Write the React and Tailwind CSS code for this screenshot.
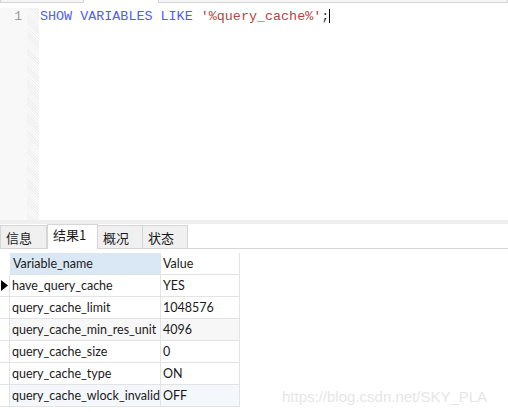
import React from 'react';

const rows = [
  { name: 'have_query_cache', value: 'YES', bg: 'bg-white', current: true },
  { name: 'query_cache_limit', value: '1048576', bg: 'bg-white' },
  { name: 'query_cache_min_res_unit', value: '4096', bg: 'bg-[#f7f7f7]' },
  { name: 'query_cache_size', value: '0', bg: 'bg-white' },
  { name: 'query_cache_type', value: 'ON', bg: 'bg-white' },
  { name: 'query_cache_wlock_invalidate', value: 'OFF', bg: 'bg-[#f4f8fc]' },
];

const tabs = [
  { label: '信息', w: 'w-[47px]' },
  { label: '结果1', w: 'w-[51px]', active: true },
  { label: '概况', w: 'w-[46px]' },
  { label: '状态', w: 'w-[46px]' },
];

function App() {
  return (
    <div
      className="w-[508px] h-[412px] bg-white relative overflow-hidden text-[#1a1a1a]"
      style={{ fontFamily: '"Noto Sans CJK SC", "Noto Sans", sans-serif' }}
    >
      {/* leftover edges of the toolbar above */}
      <div className="flex h-[8px]">
        <div className="w-[84px] h-[3px] border-x border-b border-[#d4d4d4] bg-[#f5f5f5]" />
        <div className="w-[74px]" />
        <div className="flex-1 h-[3px] border-x border-b border-[#d4d4d4] bg-[#f5f5f5]" />
      </div>

      {/* editor */}
      <div className="flex h-[212px]">
        <div className="w-[27px] bg-[#f8f8f8] text-right pr-[5px] pt-[1px] text-[13px] leading-[16px] text-[#999]"
          style={{ fontFamily: '"Liberation Mono", monospace' }}>
          1
        </div>
        <div className="w-[12px] bg-[repeating-linear-gradient(45deg,#f0f0f0_0px,#f0f0f0_1px,#fafafa_1px,#fafafa_2px)]" />
        <div
          className="flex-1 pl-[1px] pt-[1px] text-[13.4px] leading-[16px] whitespace-pre flex items-start"
          style={{ fontFamily: '"Liberation Mono", monospace' }}
        >
          <span className="text-[#4f5bff]">SHOW VARIABLES LIKE </span>
          <span className="text-[#b5443f]">'%query_cache%'</span>
          <span className="text-[#333]">;</span>
          <span className="inline-block w-[1px] h-[14px] bg-black" />
        </div>
      </div>

      <div className="h-[4px] bg-[#efefef]" />

      {/* result tabs */}
      <div className="flex h-[25px] items-end border-b border-[#d6d6d6]">
        <div className="w-[1px]" />
        {tabs.map(t => (
          <div
            key={t.label}
            className={`${t.w} flex items-center pl-[5px] text-[13px] ${
              t.active
                ? 'h-[25px] bg-white border-x border-t border-[#d6d6d6] mb-[-1px] pb-[4px]'
                : 'h-[23px] bg-[#f0f0f0] border border-b-0 border-[#d6d6d6] -ml-px first:ml-0 pt-[2px]'
            }`}
          >
            {t.label}
          </div>
        ))}
      </div>

      {/* grid */}
      <div
        className="pt-[4px] text-[12.5px]"
        style={{ fontFamily: 'Lato, "Noto Sans CJK SC", sans-serif' }}
      >
        <div className="flex h-[22px]">
          <div className="w-[10px]" />
          <div className="w-[151px] bg-[#dae8f6] border-b border-r border-[#e3e3e3] flex items-center pl-[3px] pt-[2px]">
            Variable_name
          </div>
          <div className="w-[79px] bg-white border-b border-r border-[#e3e3e3] flex items-center pl-[2px] pt-[2px]">
            Value
          </div>
        </div>
        {rows.map(r => (
          <div key={r.name} className="flex h-[22px]">
            <div className="w-[10px] border-b border-r border-[#e3e3e3] flex items-center justify-center">
              {r.current && (
                <svg width="7" height="11" viewBox="0 0 7 11">
                  <path d="M0 0 L7 5.5 L0 11 Z" fill="#000" />
                </svg>
              )}
            </div>
            <div className={`w-[151px] ${r.bg} border-b border-r border-[#e3e3e3] flex items-center pl-[2px] pt-[2px] overflow-hidden whitespace-nowrap`}>
              {r.name}
            </div>
            <div className={`w-[79px] ${r.bg} border-b border-r border-[#e3e3e3] flex items-center pl-[2px] pt-[2px]`}>
              {r.value}
            </div>
          </div>
        ))}
      </div>

      {/* watermark */}
      <div
        className="absolute left-[282px] top-[386px] text-[15px] text-[#e6e6e6]"
        style={{ fontFamily: '"Liberation Sans", Arial, sans-serif' }}
      >
        https://blog.csdn.net/SKY_PLA
      </div>
    </div>
  );
}

export default App;
